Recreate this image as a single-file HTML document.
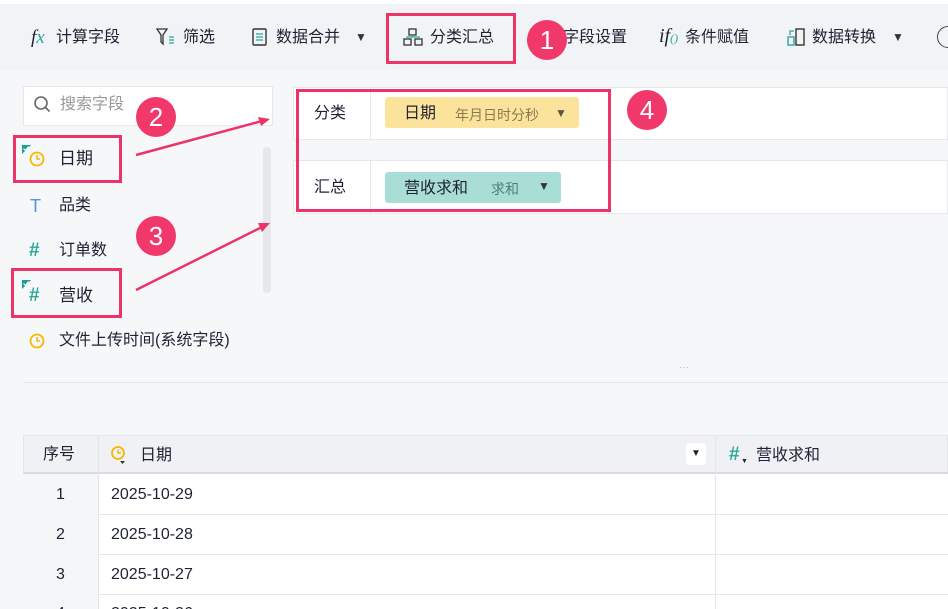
<!DOCTYPE html><html><head><meta charset="utf-8"><style>
*{margin:0;padding:0;box-sizing:border-box}
html,body{width:948px;height:609px;overflow:hidden}
body{background:#f6f7f9;font-family:"Liberation Sans","Noto Sans CJK SC",sans-serif;color:#1f2233;position:relative}
.a{position:absolute;white-space:nowrap}
.t{font-size:16px;line-height:20px}
.circ{position:absolute;width:40px;height:40px;border-radius:50%;background:#f0386b;color:#fff;font-size:26px;line-height:40px;text-align:center;font-family:"Liberation Sans",sans-serif}
.box{position:absolute;border:3px solid #ec3468}
.tri{font-size:12px;color:#333}
</style></head><body>
<div class="a" style="left:0;top:0;width:948px;height:4px;background:#fff"></div>
<div class="a" style="left:0;top:4px;width:948px;height:66px;background:#f2f3f6"></div>
<div class="a t" style="left:31px;top:28px;font-style:italic;font-family:'Liberation Serif',serif;font-size:19px">f<span style="color:#2aa89a">x</span></div>
<div class="a t" style="left:56px;top:28px">计算字段</div>
<svg class="a" style="left:156px;top:28px" width="22" height="18"><path d="M1 1h10l-4 6v9l-2-2V7z" fill="none" stroke="#333" stroke-width="1.3"/><path d="M13 9h5M13 12h5M13 15h5" stroke="#2aa89a" stroke-width="1.3"/></svg>
<div class="a t" style="left:183px;top:28px">筛选</div>
<svg class="a" style="left:251px;top:27px" width="18" height="20"><rect x="2" y="2" width="13" height="16" rx="1" fill="none" stroke="#333" stroke-width="1.4"/><path d="M5 7h7M5 10h7M5 13h7" stroke="#2aa89a" stroke-width="1.3"/></svg>
<div class="a t" style="left:276px;top:28px">数据合并</div>
<div class="a tri" style="left:355px;top:30px">▼</div>
<svg class="a" style="left:403px;top:28px" width="20" height="18"><rect x="6" y="1" width="7" height="6" fill="none" stroke="#333" stroke-width="1.3"/><rect x="1" y="11" width="7" height="6" fill="none" stroke="#333" stroke-width="1.3"/><rect x="12" y="11" width="7" height="6" fill="none" stroke="#333" stroke-width="1.3"/><path d="M9.5 7v2M4 11V9h12v2" stroke="#2aa89a" stroke-width="1.3" fill="none"/></svg>
<div class="a t" style="left:430px;top:28px">分类汇总</div>
<div class="box" style="left:386px;top:13px;width:130px;height:51px"></div>
<div class="a t" style="left:563px;top:28px">字段设置</div>
<div class="circ" style="left:527px;top:20px">1</div>
<div class="a t" style="left:659px;top:26px;font-style:italic;font-family:'Liberation Serif',serif;font-size:20px">if<span style="font-size:12px;color:#2aa89a">()</span></div>
<div class="a t" style="left:685px;top:28px">条件赋值</div>
<svg class="a" style="left:786px;top:27px" width="22" height="20"><rect x="10" y="2" width="8" height="16" fill="none" stroke="#333" stroke-width="1.4"/><rect x="2" y="10" width="6" height="8" fill="none" stroke="#2aa89a" stroke-width="1.4"/><path d="M4 8V4h4" stroke="#2aa89a" fill="none" stroke-width="1.3"/></svg>
<div class="a t" style="left:812px;top:28px">数据转换</div>
<div class="a tri" style="left:892px;top:30px">▼</div>
<div class="a" style="left:937px;top:26px;width:22px;height:22px;border:1.5px solid #444;border-radius:50%"></div>
<div class="a" style="left:23px;top:86px;width:250px;height:40px;background:#fff;border:1px solid #e6e8ec"></div>
<svg class="a" style="left:33px;top:95px" width="20" height="20"><circle cx="8" cy="8" r="6" fill="none" stroke="#666" stroke-width="1.6"/><path d="M12.5 12.5l4 4" stroke="#666" stroke-width="1.6"/></svg>
<div class="a t" style="left:60px;top:95px;color:#999">搜索字段</div>
<div class="a" style="left:263px;top:147px;width:8px;height:146px;background:#e5e7ea;border-radius:4px"></div>
<svg class="a" style="left:20px;top:143px" width="30" height="30"><path d="M2 2h9L2 11z" fill="#1a9f97"/><path d="M3.5 5.5l2 2 3-4" stroke="#fff" stroke-width="1.1" fill="none"/><circle cx="17" cy="16" r="6.5" fill="none" stroke="#f5b800" stroke-width="1.8"/><path d="M17 12v4h3" stroke="#f5b800" stroke-width="1.6" fill="none"/></svg>
<div class="a t" style="left:59px;top:149px;font-size:17px">日期</div>
<div class="box" style="left:13px;top:135px;width:109px;height:48px"></div>
<div class="a t" style="left:30px;top:196px;color:#5b8fe0;font-size:18px">T</div>
<div class="a t" style="left:59px;top:196px">品类</div>
<div class="a t" style="left:29px;top:241px;color:#2aa89a;font-size:19px;font-weight:bold">#</div>
<div class="a t" style="left:59px;top:241px">订单数</div>
<svg class="a" style="left:20px;top:278px" width="14" height="14"><path d="M2 2h9L2 11z" fill="#1a9f97"/><path d="M3.5 5.5l2 2 3-4" stroke="#fff" stroke-width="1.1" fill="none"/></svg>
<div class="a t" style="left:29px;top:286px;color:#2aa89a;font-size:19px;font-weight:bold">#</div>
<div class="a t" style="left:59px;top:286px;font-size:17px">营收</div>
<div class="box" style="left:11px;top:268px;width:111px;height:50px"></div>
<svg class="a" style="left:28px;top:332px" width="18" height="18"><circle cx="9" cy="9" r="6.5" fill="none" stroke="#f5b800" stroke-width="1.8"/><path d="M9 5v4h3" stroke="#f5b800" stroke-width="1.6" fill="none"/></svg>
<div class="a t" style="left:59px;top:331px">文件上传时间(系统字段)</div>
<div class="circ" style="left:136px;top:97px">2</div>
<div class="circ" style="left:136px;top:216px">3</div>
<svg class="a" style="left:0;top:0" width="300" height="320"><path d="M136 155L262 121" stroke="#ec3468" stroke-width="2.5"/><path d="M270 119l-12-2 3 9z" fill="#ec3468"/><path d="M136 290L262 227" stroke="#ec3468" stroke-width="2.5"/><path d="M270 223l-12 0 4 9z" fill="#ec3468"/></svg>
<div class="a" style="left:293px;top:87px;width:655px;height:53px;background:#fff;border:1px solid #e6e8ec"></div>
<div class="a" style="left:293px;top:160px;width:655px;height:54px;background:#fff;border:1px solid #e6e8ec"></div>
<div class="a" style="left:370px;top:87px;width:1px;height:53px;background:#e6e8ec"></div>
<div class="a" style="left:370px;top:160px;width:1px;height:54px;background:#e6e8ec"></div>
<div class="a t" style="left:314px;top:104px">分类</div>
<div class="a t" style="left:314px;top:178px">汇总</div>
<div class="a" style="left:385px;top:97px;width:194px;height:31px;background:#fbe39b;border-radius:3px"></div>
<div class="a t" style="left:404px;top:104px">日期</div>
<div class="a" style="left:455px;top:105px;font-size:14px;color:#8a7a50">年月日时分秒</div>
<div class="a tri" style="left:555px;top:106px;color:#555">▼</div>
<div class="a" style="left:385px;top:172px;width:176px;height:31px;background:#a8ded6;border-radius:3px"></div>
<div class="a t" style="left:404px;top:179px">营收求和</div>
<div class="a" style="left:491px;top:179px;font-size:14px;color:#4f7d78">求和</div>
<div class="a tri" style="left:538px;top:179px;color:#333">▼</div>
<div class="box" style="left:296px;top:89px;width:315px;height:123px"></div>
<div class="circ" style="left:627px;top:90px">4</div>
<div class="a" style="left:679px;top:362px;font-size:10px;color:#bbb">···</div>
<div class="a" style="left:23px;top:382px;width:925px;height:1px;background:#e3e5e9"></div>
<div class="a" style="left:23px;top:435px;width:925px;height:174px;background:#fff;border-left:1px solid #e3e5e9"></div>
<div class="a" style="left:23px;top:435px;width:925px;height:39px;background:#f0f1f4;border:1px solid #e3e5e9;border-bottom:2px solid #d9dbe0"></div>
<div class="a" style="left:23px;top:514px;width:925px;height:1px;background:#e6e8ec"></div>
<div class="a" style="left:23px;top:554px;width:925px;height:1px;background:#e6e8ec"></div>
<div class="a" style="left:23px;top:594px;width:925px;height:1px;background:#e6e8ec"></div>
<div class="a" style="left:23px;top:474px;width:75px;height:135px;background:#f5f6f8"></div>
<div class="a" style="left:98px;top:435px;width:1px;height:174px;background:#e3e5e9"></div>
<div class="a" style="left:715px;top:435px;width:1px;height:174px;background:#e6e8ec"></div>
<div class="a t" style="left:43px;top:445px">序号</div>
<svg class="a" style="left:110px;top:445px" width="22" height="22"><circle cx="8" cy="8" r="6" fill="none" stroke="#f5b800" stroke-width="1.8"/><path d="M8 4.5v3.5h3" stroke="#f5b800" stroke-width="1.5" fill="none"/><path d="M10 16h5l-2.5 3z" fill="#333"/></svg>
<div class="a t" style="left:140px;top:446px">日期</div>
<div class="a" style="left:686px;top:443px;width:20px;height:22px;background:#fff;border-radius:3px;font-size:10px;text-align:center;line-height:22px">▼</div>
<div class="a" style="left:729px;top:444px;color:#2aa89a;font-size:19px;font-weight:bold">#</div>
<div class="a" style="left:741px;top:458px;font-size:7px">▼</div>
<div class="a t" style="left:756px;top:446px">营收求和</div>
<div class="a t" style="left:56px;top:485px">1</div>
<div class="a t" style="left:111px;top:485px">2025-10-29</div>
<div class="a t" style="left:56px;top:525px">2</div>
<div class="a t" style="left:111px;top:525px">2025-10-28</div>
<div class="a t" style="left:56px;top:565px">3</div>
<div class="a t" style="left:111px;top:565px">2025-10-27</div>
<div class="a t" style="left:56px;top:604px">4</div>
<div class="a t" style="left:111px;top:604px">2025-10-26</div>
</body></html>
